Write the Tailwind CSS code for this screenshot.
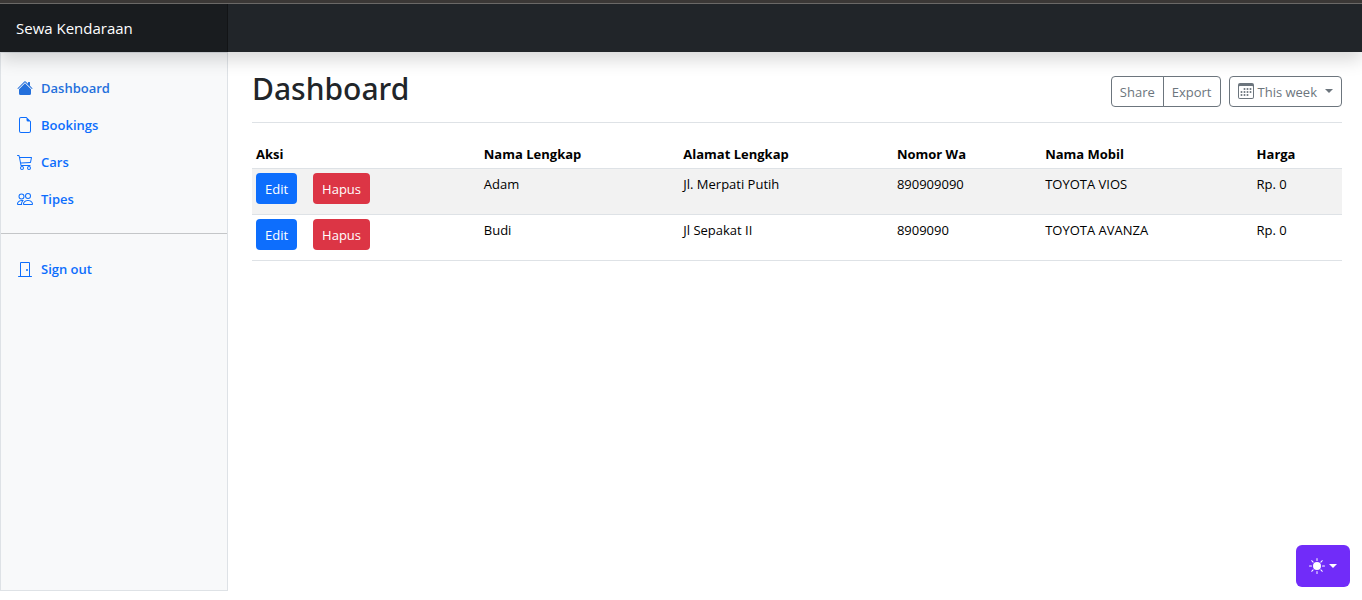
<!DOCTYPE html>
<html lang="id">
<head>
<meta charset="utf-8">
<meta name="viewport" content="width=device-width, initial-scale=1">
<title>Dashboard - Sewa Kendaraan</title>
<script src="https://cdn.jsdelivr.net/npm/@tailwindcss/browser@4"></script>
</head>
<body class="flex min-h-screen flex-col bg-white pb-[9px] font-['Segoe_UI','Open_Sans',sans-serif] text-[13px] leading-[21px] text-[#212529]">
<header class="relative z-10 flex h-[52px] border-t-[3px] border-[#3b3836] bg-[#212529] shadow-[0_8px_16px_rgba(0,0,0,0.15)]">
  <div class="flex w-full border-t border-[#6b6967]">
    <a href="#" class="flex w-[228px] shrink-0 items-center border-r border-[#121416] bg-[#191c1f] px-4 text-[15px] text-white">Sewa Kendaraan</a>
  </div>
</header>

<div class="flex grow">
  <nav aria-label="Menu" class="w-[228px] shrink-0 border border-[#dee2e6] bg-[#f8f9fa] pt-4 leading-[23px] font-semibold text-[#2470dc]">
    <ul>
      <li><a href="#" aria-current="page" class="flex items-start gap-2 px-4 pt-2 pb-1.5">
        <svg class="mt-[3px] size-4" viewBox="0 0 16 16" fill="currentColor" aria-hidden="true"><path d="M8.707 1.5a1 1 0 0 0-1.414 0L.646 8.146a.5.5 0 0 0 .708.708L8 2.207l6.646 6.647a.5.5 0 0 0 .708-.708L13 5.793V2.5a.5.5 0 0 0-.5-.5h-1a.5.5 0 0 0-.5.5v1.293z"/><path d="m8 3.293 6 6V13.5a1.5 1.5 0 0 1-1.5 1.5h-9A1.5 1.5 0 0 1 2 13.5V9.293z"/></svg>Dashboard</a></li>
      <li><a href="#" class="flex items-start gap-2 px-4 pt-2 pb-1.5 text-[#0d6efd]">
        <svg class="mt-[3px] size-4" viewBox="0 0 16 16" fill="currentColor" aria-hidden="true"><path d="M14 4.5V14a2 2 0 0 1-2 2H4a2 2 0 0 1-2-2V2a2 2 0 0 1 2-2h5.5zm-3 0A1.5 1.5 0 0 1 9.5 3V1H4a1 1 0 0 0-1 1v12a1 1 0 0 0 1 1h8a1 1 0 0 0 1-1V4.5z"/></svg>Bookings</a></li>
      <li><a href="#" class="flex items-start gap-2 px-4 pt-2 pb-1.5 text-[#0d6efd]">
        <svg class="mt-[3px] size-4" viewBox="0 0 16 16" fill="currentColor" aria-hidden="true"><path d="M0 1.5A.5.5 0 0 1 .5 1H2a.5.5 0 0 1 .485.379L2.89 3H14.5a.5.5 0 0 1 .49.598l-1 5a.5.5 0 0 1-.465.401l-9.397.472L4.415 11H13a.5.5 0 0 1 0 1H4a.5.5 0 0 1-.491-.408L2.01 3.607 1.61 2H.5a.5.5 0 0 1-.5-.5M3.102 4l.84 4.479 9.144-.459L13.89 4zM5 12a2 2 0 1 0 0 4 2 2 0 0 0 0-4m7 0a2 2 0 1 0 0 4 2 2 0 0 0 0-4m-7 1a1 1 0 1 1 0 2 1 1 0 0 1 0-2m7 0a1 1 0 1 1 0 2 1 1 0 0 1 0-2"/></svg>Cars</a></li>
      <li><a href="#" class="flex items-start gap-2 px-4 pt-2 pb-1.5 text-[#0d6efd]">
        <svg class="mt-[3px] size-4" viewBox="0 0 16 16" fill="currentColor" aria-hidden="true"><path d="M15 14s1 0 1-1-1-4-5-4-5 3-5 4 1 1 1 1zm-7.978-1L7 12.996c.001-.264.167-1.03.76-1.72C8.312 10.629 9.282 10 11 10c1.717 0 2.687.63 3.24 1.276.593.69.758 1.457.76 1.72l-.008.002-.014.002zM11 7a2 2 0 1 0 0-4 2 2 0 0 0 0 4m3-2a3 3 0 1 1-6 0 3 3 0 0 1 6 0M6.936 9.28a6 6 0 0 0-1.23-.247A7 7 0 0 0 5 9c-4 0-5 3-5 4q0 1 1 1h4.216A2.24 2.24 0 0 1 5 13c0-1.01.377-2.042 1.09-2.904.243-.294.526-.569.846-.816M4.92 10A5.5 5.5 0 0 0 4 13H1c0-.26.164-1.03.76-1.724.545-.636 1.492-1.256 3.16-1.275zM1.5 5.5a3 3 0 1 1 6 0 3 3 0 0 1-6 0m3-2a2 2 0 1 0 0 4 2 2 0 0 0 0-4"/></svg>Tipes</a></li>
    </ul>
    <hr class="my-4 border-[#c4c6c8]">
    <a href="#" class="flex items-start gap-2 px-4 pt-2 pb-1.5 text-[#0d6efd]">
      <svg class="mt-[3px] size-4" viewBox="0 0 16 16" fill="currentColor" aria-hidden="true"><path d="M3 2a1 1 0 0 1 1-1h8a1 1 0 0 1 1 1v13h1.5a.5.5 0 0 1 0 1h-13a.5.5 0 0 1 0-1H3zm1 13h8V2H4z"/><path d="M9 9a1 1 0 1 0 2 0 1 1 0 0 0-2 0"/></svg>Sign out</a>
  </nav>

  <main class="min-w-0 grow pt-4 pr-5 pl-6">
    <div class="mb-4 flex items-start justify-between border-b border-[#dee2e6] pb-3">
      <h1 class="font-['Segoe_UI','Noto_Sans','Open_Sans',sans-serif] text-[30px] leading-[42px] font-medium">Dashboard</h1>
      <div class="flex gap-2 pt-2 text-[#6c757d]">
        <div class="flex">
          <button type="button" class="h-[31px] rounded-l-sm border border-[#6c757d] px-2 pt-px">Share</button>
          <button type="button" class="-ml-px h-[31px] rounded-r-sm border border-[#6c757d] px-2 pt-px">Export</button>
        </div>
        <button type="button" class="flex h-[31px] items-start gap-1 rounded-sm border border-[#6c757d] px-2 leading-[31px]">
          <svg class="mt-1.5 size-4" viewBox="0 0 16 16" fill="currentColor" aria-hidden="true"><path d="M14 0H2a2 2 0 0 0-2 2v12a2 2 0 0 0 2 2h12a2 2 0 0 0 2-2V2a2 2 0 0 0-2-2M1 3.857C1 3.384 1.448 3 2 3h12c.552 0 1 .384 1 .857v10.286c0 .473-.448.857-1 .857H2c-.552 0-1-.384-1-.857z"/><path d="M6.5 7a1 1 0 1 0 0-2 1 1 0 0 0 0 2m3 0a1 1 0 1 0 0-2 1 1 0 0 0 0 2m3 0a1 1 0 1 0 0-2 1 1 0 0 0 0 2m-9 3a1 1 0 1 0 0-2 1 1 0 0 0 0 2m3 0a1 1 0 1 0 0-2 1 1 0 0 0 0 2m3 0a1 1 0 1 0 0-2 1 1 0 0 0 0 2m3 0a1 1 0 1 0 0-2 1 1 0 0 0 0 2m-9 3a1 1 0 1 0 0-2 1 1 0 0 0 0 2m3 0a1 1 0 1 0 0-2 1 1 0 0 0 0 2m3 0a1 1 0 1 0 0-2 1 1 0 0 0 0 2"/></svg>
          <span>This week</span>
          <span class="mt-3 ml-1 border-x-4 border-t-4 border-x-transparent border-t-current"></span>
        </button>
      </div>
    </div>

    <table class="w-full table-fixed text-left text-black">
      <colgroup><col class="w-[20.9%]"><col class="w-[18.3%]"><col class="w-[19.6%]"><col class="w-[13.6%]"><col class="w-[19.4%]"><col></colgroup>
      <thead>
        <tr class="border-b border-[#dee2e6]">
          <th class="px-1 pt-[5px] pb-[3px]">Aksi</th><th class="px-1 pt-[5px] pb-[3px]">Nama Lengkap</th><th class="px-1 pt-[5px] pb-[3px]">Alamat Lengkap</th><th class="px-1 pt-[5px] pb-[3px]">Nomor Wa</th><th class="px-1 pt-[5px] pb-[3px]">Nama Mobil</th><th class="px-1 pt-[5px] pb-[3px]">Harga</th>
        </tr>
      </thead>
      <tbody class="align-top">
        <tr class="h-[46px] border-b border-[#dee2e6] bg-[#f2f2f2]">
          <td class="p-1"><div class="flex gap-4"><button type="button" class="h-[31px] rounded-sm bg-[#0d6efd] px-[9px] pt-px text-white">Edit</button><button type="button" class="h-[31px] rounded-sm bg-[#dc3545] px-[9px] pt-px text-white">Hapus</button></div></td>
          <td class="px-1 pt-[5px]">Adam</td><td class="px-1 pt-[5px]">Jl. Merpati Putih</td><td class="px-1 pt-[5px]">890909090</td><td class="px-1 pt-[5px]">TOYOTA VIOS</td><td class="px-1 pt-[5px]">Rp. 0</td>
        </tr>
        <tr class="h-[46px] border-b border-[#dee2e6]">
          <td class="p-1"><div class="flex gap-4"><button type="button" class="h-[31px] rounded-sm bg-[#0d6efd] px-[9px] pt-px text-white">Edit</button><button type="button" class="h-[31px] rounded-sm bg-[#dc3545] px-[9px] pt-px text-white">Hapus</button></div></td>
          <td class="px-1 pt-[5px]">Budi</td><td class="px-1 pt-[5px]">Jl Sepakat II</td><td class="px-1 pt-[5px]">8909090</td><td class="px-1 pt-[5px]">TOYOTA AVANZA</td><td class="px-1 pt-[5px]">Rp. 0</td>
        </tr>
      </tbody>
    </table>
  </main>
</div>

<button type="button" aria-label="Toggle theme" class="fixed right-3 bottom-[13px] flex h-[42px] items-center gap-1 rounded-md bg-[#712cf9] px-[13px] text-white">
  <svg class="size-4" viewBox="0 0 16 16" fill="currentColor" aria-hidden="true"><path d="M8 12a4 4 0 1 0 0-8 4 4 0 0 0 0 8M8 0a.5.5 0 0 1 .5.5v2a.5.5 0 0 1-1 0v-2A.5.5 0 0 1 8 0m0 13a.5.5 0 0 1 .5.5v2a.5.5 0 0 1-1 0v-2A.5.5 0 0 1 8 13m8-5a.5.5 0 0 1-.5.5h-2a.5.5 0 0 1 0-1h2a.5.5 0 0 1 .5.5M3 8a.5.5 0 0 1-.5.5h-2a.5.5 0 0 1 0-1h2A.5.5 0 0 1 3 8m10.657-5.657a.5.5 0 0 1 0 .707l-1.414 1.415a.5.5 0 1 1-.707-.708l1.414-1.414a.5.5 0 0 1 .707 0m-9.193 9.193a.5.5 0 0 1 0 .707L3.05 13.657a.5.5 0 0 1-.707-.707l1.414-1.414a.5.5 0 0 1 .707 0m9.193 2.121a.5.5 0 0 1-.707 0l-1.414-1.414a.5.5 0 0 1 .707-.707l1.414 1.414a.5.5 0 0 1 0 .707M4.464 4.465a.5.5 0 0 1-.707 0L2.343 3.05a.5.5 0 1 1 .707-.707l1.414 1.414a.5.5 0 0 1 0 .708"/></svg>
  <span class="border-x-4 border-t-4 border-x-transparent border-t-current"></span>
</button>
</body>
</html>
